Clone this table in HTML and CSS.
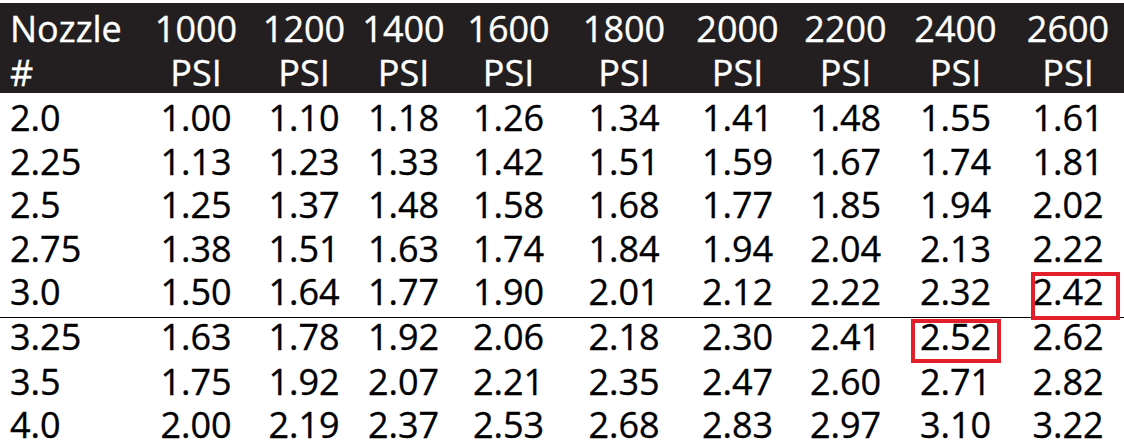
FILE: index.html
```html
<!DOCTYPE html>
<html lang="en">
<head>
<meta charset="utf-8">
<title>Nozzle flow chart</title>
<link rel="stylesheet" href="styles.css">
</head>
<body>
<div class="chart">
  <div class="row head">
    <div class="cell first">Nozzle<br>#</div>
    <div class="cell">1000<br>PSI</div>
    <div class="cell">1200<br>PSI</div>
    <div class="cell">1400<br>PSI</div>
    <div class="cell">1600<br>PSI</div>
    <div class="cell">1800<br>PSI</div>
    <div class="cell">2000<br>PSI</div>
    <div class="cell">2200<br>PSI</div>
    <div class="cell">2400<br>PSI</div>
    <div class="cell">2600<br>PSI</div>
  </div>
  <div class="body">
    <div class="row data top"><div class="cell first">2.0</div><div class="cell">1.00</div><div class="cell">1.10</div><div class="cell">1.18</div><div class="cell">1.26</div><div class="cell">1.34</div><div class="cell">1.41</div><div class="cell">1.48</div><div class="cell">1.55</div><div class="cell">1.61</div></div>
    <div class="row data"><div class="cell first">2.25</div><div class="cell">1.13</div><div class="cell">1.23</div><div class="cell">1.33</div><div class="cell">1.42</div><div class="cell">1.51</div><div class="cell">1.59</div><div class="cell">1.67</div><div class="cell">1.74</div><div class="cell">1.81</div></div>
    <div class="row data"><div class="cell first">2.5</div><div class="cell">1.25</div><div class="cell">1.37</div><div class="cell">1.48</div><div class="cell">1.58</div><div class="cell">1.68</div><div class="cell">1.77</div><div class="cell">1.85</div><div class="cell">1.94</div><div class="cell">2.02</div></div>
    <div class="row data"><div class="cell first">2.75</div><div class="cell">1.38</div><div class="cell">1.51</div><div class="cell">1.63</div><div class="cell">1.74</div><div class="cell">1.84</div><div class="cell">1.94</div><div class="cell">2.04</div><div class="cell">2.13</div><div class="cell">2.22</div></div>
    <div class="row data ruled"><div class="cell first">3.0</div><div class="cell">1.50</div><div class="cell">1.64</div><div class="cell">1.77</div><div class="cell">1.90</div><div class="cell">2.01</div><div class="cell">2.12</div><div class="cell">2.22</div><div class="cell">2.32</div><div class="cell mark mark-a">2.42</div></div>
    <div class="row data after-rule"><div class="cell first">3.25</div><div class="cell">1.63</div><div class="cell">1.78</div><div class="cell">1.92</div><div class="cell">2.06</div><div class="cell">2.18</div><div class="cell">2.30</div><div class="cell">2.41</div><div class="cell mark mark-b">2.52</div><div class="cell">2.62</div></div>
    <div class="row data"><div class="cell first">3.5</div><div class="cell">1.75</div><div class="cell">1.92</div><div class="cell">2.07</div><div class="cell">2.21</div><div class="cell">2.35</div><div class="cell">2.47</div><div class="cell">2.60</div><div class="cell">2.71</div><div class="cell">2.82</div></div>
    <div class="row data"><div class="cell first">4.0</div><div class="cell">2.00</div><div class="cell">2.19</div><div class="cell">2.37</div><div class="cell">2.53</div><div class="cell">2.68</div><div class="cell">2.83</div><div class="cell">2.97</div><div class="cell">3.10</div><div class="cell">3.22</div></div>
  </div>
</div>
</body>
</html>
```
FILE: styles.css
```css
html, body {
  margin: 0;
  padding: 0;
  background: #ffffff;
}

body {
  padding-top: 3px;
  font-family: "Open Sans", "Noto Sans", "Liberation Sans", sans-serif;
  font-size: 36px;
  font-weight: 400;
  color: #000000;
  -webkit-text-stroke: 0.35px currentColor;
  overflow: hidden;
}

.chart {
  width: 1124px;
}

.row {
  display: grid;
  grid-template-columns: 139px 114px 102px 97px 113px 118px 109px 107px 113px 112px;
}

.cell {
  text-align: center;
  white-space: nowrap;
}

.cell.first {
  text-align: left;
  padding-left: 10px;
}

.head {
  background: #231f20;
  color: #ffffff;
  height: 90px;
  box-sizing: border-box;
  padding-top: 4px;
  line-height: 44px;
}

.data {
  line-height: 43.5px;
}

.data.top {
  margin-top: 3px;
}

.data.ruled {
  padding-bottom: 3px;
  border-bottom: 1px solid #000000;
}

.data.after-rule {
  line-height: 38.5px;
  padding-bottom: 3.5px;
}

.mark {
  position: relative;
}

.mark::after {
  content: "";
  position: absolute;
  border: 4px solid #e21f2a;
}

.mark-a::after {
  left: 19px;
  right: 4px;
  top: 2px;
  bottom: -6px;
}

.mark-b::after {
  left: 12px;
  right: 11px;
  top: 1.5px;
  bottom: -7px;
}
```
